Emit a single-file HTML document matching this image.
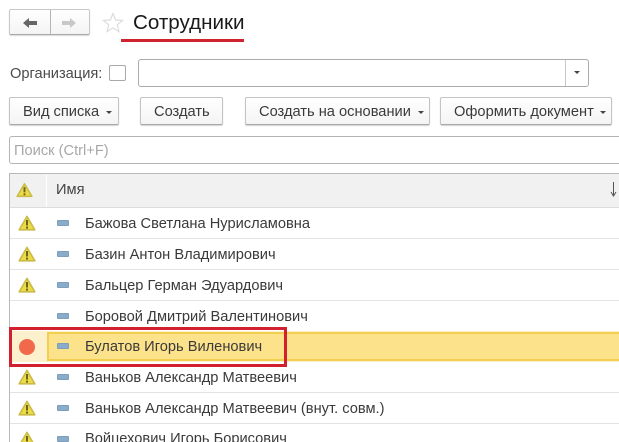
<!DOCTYPE html>
<html lang="ru"><head><meta charset="utf-8"><title>Сотрудники</title>
<style>
html,body{margin:0;padding:0;background:#fff}
#p{position:relative;width:619px;height:442px;overflow:hidden;background:#fff;font-family:"Liberation Sans",sans-serif;color:#3a3a3a;font-size:14.65px}
#p div,#p span.t,#p svg{position:absolute}
.t{white-space:nowrap;line-height:16px}
.btn{box-sizing:border-box;height:28px;top:97px;border:1px solid #c4c4c4;border-bottom-color:#a8a8a8;border-radius:2px;background:linear-gradient(#fff,#f4f4f4);box-shadow:0 1px 1px rgba(0,0,0,.18)}
.btn .t{top:6px}
.caret{width:0;height:0;border:3px solid transparent;border-top-color:#444;border-bottom:0}
.row{left:10px;width:609px;height:1px;background:#e3e3e3}
.dash{left:57px;width:12px;height:6px;box-sizing:border-box;background:#8aaccb;border:1px solid #7d9fbd;border-radius:1px}
</style></head><body><div id="p">

<div style="left:9px;top:9px;width:81px;height:26px;box-sizing:border-box;border:1px solid #c8c8c8;border-bottom-color:#a8a8a8;border-radius:2px;background:linear-gradient(#fff,#f4f4f4);box-shadow:0 1px 1px rgba(0,0,0,.15)"></div>
<div style="left:50px;top:10px;width:1px;height:25px;background:#b4b4b4"></div>
<svg style="left:22px;top:17px" width="16" height="12" viewBox="0 0 16 12"><path d="M1 6 L7 1 V4 H15 V8 H7 V11 Z" fill="#666"/></svg>
<svg style="left:61px;top:17px" width="16" height="12" viewBox="0 0 16 12"><path d="M15 6 L9 1 V4 H1 V8 H9 V11 Z" fill="#c8c8c8"/></svg>
<svg style="left:102px;top:12px" width="22" height="21" viewBox="0 0 22 21"><path d="M11 1.5 L13.7 8 L20.6 8.4 L15.3 12.8 L17 19.6 L11 15.9 L5 19.6 L6.7 12.8 L1.4 8.4 L8.3 8 Z" fill="#fff" stroke="#dcdcdc" stroke-width="1.2"/></svg>
<span class="t" style="left:133px;top:11px;font-size:20.6px;line-height:24px;color:#1a1a1a">Сотрудники</span>
<div style="left:121px;top:39px;width:123px;height:3px;background:#cf2430"></div>

<span class="t" style="left:10px;top:66px;color:#4a4a4a">Организация:</span>
<div style="left:109px;top:65px;width:17px;height:16px;box-sizing:border-box;border:1px solid #a8a8a8;border-radius:2px;background:#fff"></div>
<div style="left:138px;top:59px;width:451px;height:28px;box-sizing:border-box;border:1px solid #ababab;border-radius:3px;background:#fff"></div>
<div style="left:565px;top:60px;width:1px;height:26px;background:#c8c8c8"></div>
<div class="caret" style="left:574px;top:71px"></div>

<div class="btn" style="left:9px;width:110px"><span class="t" style="left:13px">Вид списка</span><div class="caret" style="left:96px;top:13px"></div></div>
<div class="btn" style="left:140px;width:83px"><span class="t" style="left:13px">Создать</span></div>
<div class="btn" style="left:245px;width:185px"><span class="t" style="left:13px">Создать на основании</span><div class="caret" style="left:172px;top:13px"></div></div>
<div class="btn" style="left:440px;width:172px"><span class="t" style="left:13px">Оформить документ</span><div class="caret" style="left:159px;top:13px"></div></div>

<div style="left:9px;top:136px;width:620px;height:28px;box-sizing:border-box;border:1px solid #b4b4b4;border-radius:3px;background:#fff"></div>
<span class="t" style="left:14px;top:143px;color:#a8a8a8">Поиск (Ctrl+F)</span>

<div style="left:9px;top:173px;width:610px;height:1px;background:#b8b8b8"></div>
<div style="left:9px;top:173px;width:1px;height:269px;background:#b8b8b8"></div>
<div style="left:10px;top:174px;width:609px;height:33px;background:#f1f1f1"></div>
<div style="left:46px;top:174px;width:1px;height:33px;background:#fff"></div>
<div style="left:10px;top:207px;width:609px;height:1px;background:#dcdcdc"></div>
<span class="t" style="left:56px;top:182px;color:#444">Имя</span>
<svg style="left:609px;top:181px" width="9" height="16" viewBox="0 0 9 16"><path d="M4.5 1 V14 M2 11 L4.5 15 L7 11" fill="none" stroke="#555" stroke-width="1"/></svg>

<div class="row" style="top:238px"></div>
<div class="row" style="top:269px"></div>
<div class="row" style="top:300px"></div>
<div class="row" style="top:392px"></div>
<div class="row" style="top:423px"></div>

<div style="left:10px;top:331px;width:609px;height:31px;background:#fdf0cc"></div>
<div style="left:47px;top:332px;width:572px;height:29px;box-sizing:border-box;background:#fde28c;border:2px solid #f3cf4f;border-right:0"></div>
<div style="left:19px;top:339px;width:16px;height:16px;border-radius:50%;background:#f2684a"></div>

<svg style="left:16px;top:182px" width="17" height="16" viewBox="0 0 18 16"><path d="M9 1.4 L16.8 14.8 H1.2 Z" fill="#ebdb45" stroke="#cabb48" stroke-width="1.6" stroke-linejoin="round"/><path d="M9 5 V10.5 M9 11.6 V13.6" stroke="#6d6220" stroke-width="2"/></svg>
<svg style="left:18px;top:215px" width="18" height="16" viewBox="0 0 18 16"><path d="M9 1.4 L16.8 14.8 H1.2 Z" fill="#ebdb45" stroke="#cabb48" stroke-width="1.6" stroke-linejoin="round"/><path d="M9 5 V10.5 M9 11.6 V13.6" stroke="#6d6220" stroke-width="2"/></svg>
<svg style="left:18px;top:246px" width="18" height="16" viewBox="0 0 18 16"><path d="M9 1.4 L16.8 14.8 H1.2 Z" fill="#ebdb45" stroke="#cabb48" stroke-width="1.6" stroke-linejoin="round"/><path d="M9 5 V10.5 M9 11.6 V13.6" stroke="#6d6220" stroke-width="2"/></svg>
<svg style="left:18px;top:277px" width="18" height="16" viewBox="0 0 18 16"><path d="M9 1.4 L16.8 14.8 H1.2 Z" fill="#ebdb45" stroke="#cabb48" stroke-width="1.6" stroke-linejoin="round"/><path d="M9 5 V10.5 M9 11.6 V13.6" stroke="#6d6220" stroke-width="2"/></svg>
<svg style="left:18px;top:369px" width="18" height="16" viewBox="0 0 18 16"><path d="M9 1.4 L16.8 14.8 H1.2 Z" fill="#ebdb45" stroke="#cabb48" stroke-width="1.6" stroke-linejoin="round"/><path d="M9 5 V10.5 M9 11.6 V13.6" stroke="#6d6220" stroke-width="2"/></svg>
<svg style="left:18px;top:400px" width="18" height="16" viewBox="0 0 18 16"><path d="M9 1.4 L16.8 14.8 H1.2 Z" fill="#ebdb45" stroke="#cabb48" stroke-width="1.6" stroke-linejoin="round"/><path d="M9 5 V10.5 M9 11.6 V13.6" stroke="#6d6220" stroke-width="2"/></svg>
<svg style="left:18px;top:431px" width="18" height="16" viewBox="0 0 18 16"><path d="M9 1.4 L16.8 14.8 H1.2 Z" fill="#ebdb45" stroke="#cabb48" stroke-width="1.6" stroke-linejoin="round"/><path d="M9 5 V10.5 M9 11.6 V13.6" stroke="#6d6220" stroke-width="2"/></svg>

<div class="dash" style="top:220px"></div>
<div class="dash" style="top:251px"></div>
<div class="dash" style="top:282px"></div>
<div class="dash" style="top:313px"></div>
<div class="dash" style="top:343px"></div>
<div class="dash" style="top:374px"></div>
<div class="dash" style="top:405px"></div>
<div class="dash" style="top:436px"></div>

<span class="t" style="left:85px;top:216px">Бажова Светлана Нурисламовна</span>
<span class="t" style="left:85px;top:247px">Базин Антон Владимирович</span>
<span class="t" style="left:85px;top:278px">Бальцер Герман Эдуардович</span>
<span class="t" style="left:85px;top:309px">Боровой Дмитрий Валентинович</span>
<span class="t" style="left:85px;top:339px">Булатов Игорь Виленович</span>
<span class="t" style="left:85px;top:370px">Ваньков Александр Матвеевич</span>
<span class="t" style="left:85px;top:401px">Ваньков Александр Матвеевич (внут. совм.)</span>
<span class="t" style="left:85px;top:431px">Войцехович Игорь Борисович</span>

<div style="left:9px;top:327px;width:278px;height:40px;box-sizing:border-box;border:3px solid #d3202e"></div>
</div></body></html>
